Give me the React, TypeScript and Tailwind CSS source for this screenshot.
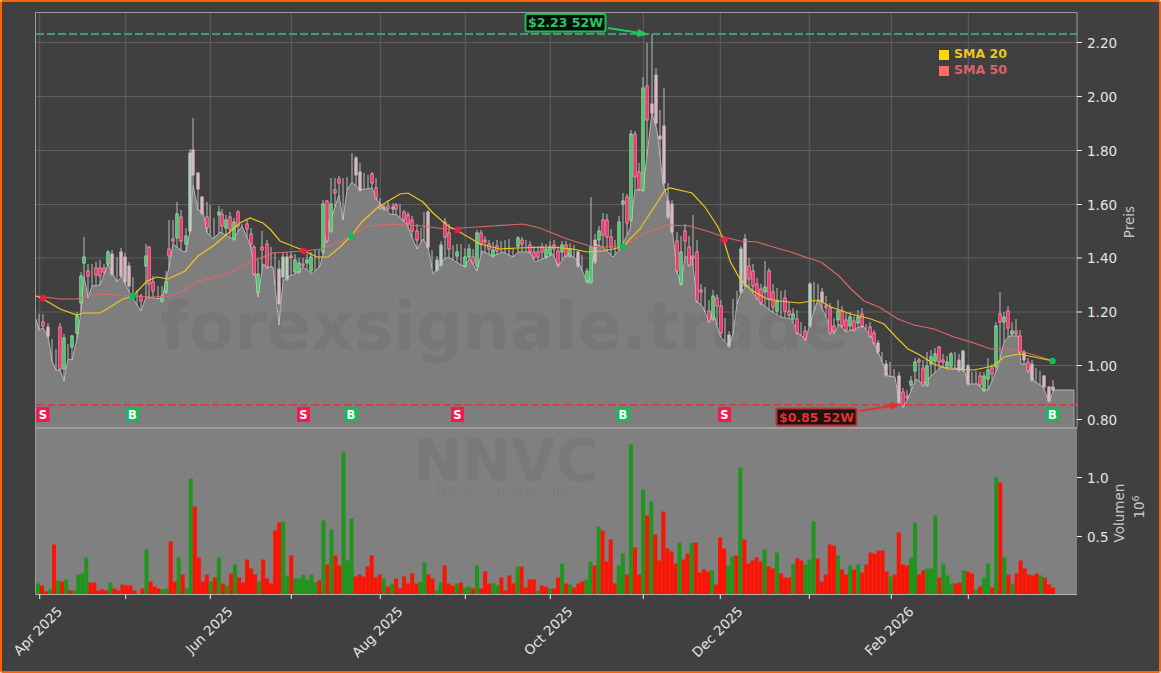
import React from 'react';

type Pt = [number, number];
type Candle = [number, number, number, string, number?];

const PLOT_L = 35.5;
const PLOT_R = 1077;
const PLOT_T = 12.5;
const PRICE_B = 428;
const VOL_B = 594.5;

const area: Pt[] = [
  [36, 319], [39, 330], [43, 328], [48, 336], [52, 361], [56, 370], [60, 370], [64, 381], [68, 359], [72, 360], [77, 339], [81, 311], [84, 276], [88, 298], [92, 286], [100, 285], [108, 264], [117, 282], [122, 276], [130, 294], [141, 311], [146, 297], [162, 299], [169, 267], [173, 244], [182, 251], [186, 252], [190, 231], [193, 185], [198, 210], [203, 212], [207, 232], [213, 239], [220, 232], [233, 239], [242, 226], [250, 244], [254, 264], [258, 297], [263, 264], [268, 267], [273, 267], [279, 325], [283, 281], [287, 277], [295, 274], [303, 267], [312, 274], [320, 266], [323, 254], [328, 224], [333, 213], [339, 195], [343, 220], [347, 190], [352, 182], [360, 190], [372, 188], [377, 200], [390, 214], [397, 215], [407, 224], [412, 237], [417, 249], [423, 239], [428, 247], [433, 274], [442, 261], [448, 257], [463, 266], [470, 259], [477, 271], [482, 251], [493, 256], [503, 252], [513, 257], [518, 252], [530, 252], [535, 262], [547, 257], [553, 254], [558, 267], [567, 252], [578, 261], [588, 284], [592, 267], [595, 244], [603, 247], [613, 257], [620, 249], [630, 229], [635, 190], [643, 190], [652, 113], [657, 130], [663, 183], [668, 200], [672, 227], [677, 271], [681, 285], [685, 257], [692, 257], [697, 301], [703, 307], [709, 322], [713, 311], [720, 336], [729, 346], [733, 334], [737, 304], [741, 292], [747, 286], [762, 304], [771, 311], [781, 317], [791, 319], [799, 334], [806, 339], [809, 327], [818, 299], [826, 317], [834, 334], [839, 324], [846, 332], [854, 329], [863, 326], [871, 336], [879, 354], [888, 376], [895, 377], [899, 402], [904, 406], [909, 396], [916, 379], [923, 384], [931, 376], [941, 367], [964, 369], [968, 384], [978, 384], [983, 390], [988, 390], [998, 367], [1004, 342], [1009, 336], [1018, 336], [1021, 364], [1028, 364], [1034, 381], [1043, 387], [1049, 401], [1054, 390], [1074, 390],
];

const sma20: Pt[] = [
  [36, 296], [43, 299], [60, 309], [77, 315], [83, 313], [100, 313], [107, 309], [123, 299], [133, 296], [147, 281], [157, 277], [168, 279], [185, 271], [198, 256], [213, 246], [225, 236], [240, 223], [250, 218], [263, 223], [270, 229], [280, 241], [300, 249], [317, 257], [328, 257], [340, 247], [351, 236], [362, 222], [377, 208], [390, 200], [400, 194], [408, 193], [423, 202], [433, 213], [448, 226], [458, 231], [480, 244], [500, 249], [517, 248], [550, 247], [573, 249], [587, 252], [603, 251], [623, 247], [630, 239], [640, 229], [643, 224], [657, 203], [665, 190], [670, 188], [692, 193], [705, 207], [718, 227], [724, 241], [730, 261], [740, 279], [753, 291], [767, 299], [780, 301], [799, 303], [818, 300], [831, 307], [851, 314], [871, 319], [884, 324], [896, 337], [908, 349], [918, 354], [934, 364], [948, 369], [974, 370], [993, 366], [1004, 357], [1019, 354], [1034, 357], [1053, 361],
];

const sma50: Pt[] = [
  [36, 296], [60, 299], [77, 299], [88, 296], [100, 294], [133, 296], [153, 297], [170, 296], [183, 291], [197, 282], [227, 274], [250, 262], [273, 253], [303, 251], [323, 249], [350, 237], [367, 226], [390, 224], [423, 226], [445, 229], [477, 227], [523, 224], [540, 228], [567, 239], [590, 246], [603, 247], [623, 247], [643, 234], [667, 225], [690, 226], [710, 232], [724, 237], [740, 241], [757, 242], [780, 249], [791, 252], [808, 258], [821, 262], [839, 276], [851, 289], [864, 301], [879, 307], [898, 319], [914, 325], [934, 329], [954, 337], [971, 342], [991, 349], [1011, 349], [1031, 354], [1053, 361],
];

const candles: Candle[] = [
  [39, 314, 318, 'w'], [43, 322, 326, 'r', 314], [48, 327, 336, 'p'], [52, 339, 339, 'w'], [56, 349, 349, 'w'], [60, 327, 369, 'r'], [64, 338, 369, 'g'], [68, 344, 344, 'w'], [72, 336, 347, 'g', 335], [77, 316, 333, 'g', 312], [81, 276, 303, 'g', 272], [84, 257, 263, 'g', 237], [88, 271, 276, 'r', 264], [92, 264, 264, 'w'], [96, 268, 275, 'r', 262], [100, 268, 276, 'r', 260], [104, 268, 272, 'r', 264], [108, 252, 264, 'g', 250], [112, 254, 274, 'p'], [117, 257, 257, 'w'], [121, 252, 276, 'p'], [125, 257, 282, 'p'], [129, 266, 286, 'p'], [133, 277, 277, 'w'], [137, 290, 290, 'w'], [141, 296, 301, 'r', 294], [146, 256, 266, 'g', 244], [149, 247, 284, 'r', 246], [153, 282, 291, 'r', 276], [158, 286, 286, 'w'], [162, 296, 301, 'g', 286], [166, 282, 292, 'g', 271], [169, 249, 256, 'r', 220], [173, 239, 241, 'r', 220], [177, 214, 238, 'g', 202], [181, 217, 241, 'r', 210], [186, 236, 244, 'g', 228],
  [190, 153, 231, 'q'], [193, 150, 175, 'p', 118], [198, 173, 189, 'p', 172], [202, 197, 213, 'p', 196], [207, 217, 228, 'r', 202], [210, 205, 205, 'w'], [214, 218, 218, 'w'], [219, 212, 215, 'g', 206], [222, 214, 226, 'r', 209], [226, 220, 228, 'g', 215], [230, 217, 229, 'r', 212], [234, 222, 239, 'g', 218], [238, 212, 226, 'r', 210], [242, 224, 224, 'w'], [247, 224, 229, 'r', 220], [251, 234, 244, 'r', 228], [254, 247, 274, 'r', 245], [258, 274, 292, 'g', 260], [262, 247, 250, 'r', 231], [267, 244, 267, 'r', 240], [271, 247, 247, 'w'], [275, 252, 252, 'w'], [279, 269, 304, 'p', 260], [283, 257, 277, 'q', 252], [287, 257, 279, 'q', 252], [291, 256, 257, 'r', 252], [295, 260, 272, 'g', 254], [299, 263, 272, 'g', 258], [303, 264, 265, 'r', 258], [307, 260, 263, 'g', 254], [311, 257, 271, 'g', 252], [315, 250, 250, 'w'], [319, 250, 250, 'w'], [323, 204, 252, 'g', 200], [327, 201, 241, 'r', 200], [331, 204, 231, 'g', 178], [335, 190, 193, 'r', 178], [339, 179, 183, 'r', 176], [343, 178, 178, 'w'], [347, 177, 177, 'w'], [352, 153, 153, 'w'], [356, 158, 175, 'p', 156], [360, 172, 190, 'p', 163], [364, 173, 173, 'w'], [368, 175, 175, 'w'], [372, 174, 183, 'r', 172], [376, 188, 198, 'r', 178], [380, 205, 208, 'r', 198], [384, 207, 209, 'g', 204], [388, 206, 209, 'r', 200],
  [393, 207, 209, 'g', 203], [396, 205, 209, 'r', 203], [400, 204, 204, 'w'], [404, 212, 220, 'r', 210], [408, 215, 224, 'r', 212], [412, 220, 231, 'r', 216], [417, 231, 240, 'r', 224], [421, 228, 228, 'w'], [424, 212, 212, 'w'], [428, 212, 247, 'p', 210], [432, 250, 250, 'w'], [437, 260, 270, 'q'], [441, 245, 265, 'q'], [445, 222, 237, 'r', 218], [449, 233, 249, 'r', 224], [453, 245, 245, 'w'], [457, 252, 256, 'g', 244], [461, 244, 244, 'w'], [465, 257, 266, 'g', 248], [469, 249, 257, 'g', 244], [473, 257, 263, 'r', 249], [477, 233, 266, 'g', 230], [481, 233, 244, 'r', 230], [485, 240, 242, 'r', 236], [489, 244, 249, 'r', 240], [493, 250, 256, 'g', 242], [497, 246, 251, 'r', 240], [501, 241, 241, 'w'], [505, 240, 240, 'w'], [509, 239, 239, 'w'], [513, 249, 249, 'w'], [518, 238, 246, 'g', 236], [522, 240, 244, 'r', 237], [526, 240, 240, 'w'], [530, 245, 252, 'r', 241], [534, 252, 257, 'r', 246], [538, 252, 257, 'r', 246], [542, 247, 252, 'r', 243], [546, 249, 257, 'g', 244], [550, 247, 254, 'g', 241], [554, 245, 249, 'r', 240], [558, 251, 264, 'r', 246], [562, 245, 252, 'g', 241], [566, 245, 256, 'r', 241], [570, 249, 256, 'g', 243], [574, 245, 245, 'w'], [578, 252, 266, 'p', 250], [582, 255, 255, 'w'], [587, 271, 281, 'g', 268], [591, 247, 282, 'g', 197], [595, 240, 262, 'p', 234], [599, 231, 240, 'g', 226], [603, 220, 235, 'r', 213], [607, 220, 237, 'r', 214], [611, 237, 247, 'r', 229], [615, 240, 240, 'w'], [619, 222, 247, 'g', 216],
  [623, 201, 204, 'g', 193], [627, 197, 223, 'r', 194], [631, 134, 220, 'g'], [635, 134, 177, 'r', 131], [639, 172, 189, 'r', 163], [643, 88, 190, 'g', 77], [647, 86, 120, 'r', 43], [652, 104, 113, 'p', 34], [656, 75, 123, 'p', 68], [660, 136, 139, 'p', 110], [664, 126, 183, 'p', 88], [668, 201, 217, 'p', 183], [672, 204, 232, 'p', 200], [677, 241, 271, 'r', 232], [681, 252, 284, 'g', 236], [685, 231, 241, 'r', 224], [689, 247, 265, 'r', 236], [693, 256, 258, 'r', 215], [697, 252, 301, 'r', 240], [701, 290, 292, 'r', 284], [705, 287, 287, 'w'], [709, 311, 321, 'r', 300], [713, 296, 319, 'g', 290], [717, 298, 306, 'r', 294], [721, 306, 333, 'r', 300], [725, 318, 318, 'w'], [729, 335, 346, 'q'], [733, 299, 299, 'w'], [737, 291, 291, 'w'], [741, 249, 292, 'q', 246], [745, 239, 286, 'p', 234], [749, 266, 279, 'r', 258], [753, 271, 286, 'r', 264], [757, 284, 298, 'r', 278], [761, 289, 303, 'r', 284], [765, 287, 292, 'g', 261], [769, 271, 299, 'r', 268], [773, 292, 307, 'r', 284], [777, 301, 311, 'g', 288], [781, 291, 291, 'w'], [785, 298, 311, 'r', 290], [789, 311, 315, 'r', 302], [793, 314, 319, 'g', 308], [797, 319, 333, 'r', 310], [801, 322, 322, 'w'], [805, 331, 339, 'r', 326],
  [810, 284, 326, 'q', 282], [814, 282, 282, 'w'], [818, 284, 284, 'w'], [822, 292, 302, 'p', 288], [826, 306, 307, 'r', 296], [830, 308, 333, 'r', 303], [834, 326, 331, 'r', 318], [838, 311, 320, 'g', 300], [842, 311, 326, 'r', 306], [846, 320, 330, 'r', 313], [850, 317, 326, 'g', 312], [854, 321, 330, 'r', 316], [858, 317, 323, 'g', 310], [862, 314, 326, 'r', 308], [866, 324, 324, 'w'], [870, 327, 336, 'r', 322], [874, 333, 343, 'r', 330], [878, 343, 352, 'p', 340], [882, 352, 352, 'w'], [886, 364, 375, 'p', 360], [890, 362, 362, 'w'], [894, 369, 369, 'w'], [899, 376, 402, 'p'], [903, 392, 406, 'r', 388], [907, 396, 397, 'r', 390], [911, 381, 385, 'g', 376], [915, 362, 371, 'g', 358], [919, 360, 362, 'r', 358], [923, 368, 385, 'r', 360], [927, 366, 385, 'g', 352], [931, 357, 364, 'g', 350], [935, 354, 361, 'g', 348], [939, 347, 362, 'r', 346], [943, 360, 362, 'r', 354], [947, 362, 366, 'g', 356], [951, 354, 366, 'g', 352], [955, 352, 352, 'w'], [959, 360, 370, 'p', 354], [963, 351, 370, 'q', 350], [968, 366, 384, 'p', 364], [972, 372, 372, 'w'], [976, 371, 371, 'w'], [980, 376, 385, 'r', 372], [984, 376, 390, 'g', 372], [988, 370, 379, 'g', 358], [992, 368, 374, 'r', 364], [996, 326, 367, 'g', 322], [1000, 314, 322, 'r', 292], [1004, 317, 322, 'g', 312], [1008, 311, 328, 'r', 306], [1012, 331, 334, 'g', 322], [1016, 331, 334, 'r', 319], [1020, 336, 352, 'r', 330], [1024, 352, 360, 'p', 350], [1028, 362, 371, 'r', 358], [1032, 364, 380, 'p', 360], [1036, 368, 368, 'w'], [1040, 371, 371, 'w'], [1044, 376, 387, 'p', 375], [1049, 387, 401, 'p', 386], [1053, 387, 390, 'p', 380],
];

// bar height in px, negative means red
const volSegments: { start: number; step: number; bars: number[] }[] = [
  {
    start: 36,
    step: 4.02,
    bars: [11, -9, -3, 5, -50, 14, -13, 15, -4, 4, 20, 21, 37, -12, -12, -4, -5, -4, 12, -6, -4, -10, -9, -9, -4, 1, -6, 45, -13, -8, -6, 5, 6, -53, -13, 37, -20, 6, 116, -88, -37, -13, -20, 13, -17, 37, -11, 9, -21, 30, -17, -12, -35, -26, -20, 13, -35, -16, -11, -64, -72, 73, 19, -39, 16, 16, 20, 15, 20, 12, -14, 74, -30, 65, -39, -29, 142, 34, 76, -18, -20, -18, -28, -39, -17, -20, 16, -8],
  },
  {
    start: 390,
    step: 4.05,
    bars: [11, -16, -6, -18, -11, -21, -11, 13, 32, -20, -16, 4, 12, -29, -11, -9, 11, -12, 7, 8, -6, 29, -6, -23, -11, 11, 9, -17, -4, -19, -11, 28, -28, -7, -15, -15, 4, -9, -8, 6, -6, -17, 31, -11, 10, -7, -11, -13, 15, 33, -29, 68, -64, -33, -55, -11, 29, 41, -20, 150, -47, -20, 105, -79, 93, -60, -34, -83, -46, -43, -31, 52, -35, -41, 52, -52, -22, -25, -23, 24, -10, -57, -46, 29, 38, -39, 127, -55, -31, -34, -37, -33, 45, -28, -26],
  },
  {
    start: 775,
    step: 4.06,
    bars: [42, -21, -17, -17, 31, -36, -34, 30, 35, 73, -36, -13, -20, -50, -49, 39, -25, -20, 29, -25, 30, -22, -30, -42, -41, -44, -44, -23, 18, -20, -62, -30, -29, 37, 72, -20, -24, 26, 26, 79, -17, 31, 19, 11, -11, -12, 24, -23, -21, 5, -8, 17, 31, -7, 117, -112, 37, -20, 11, -21, -34, -26, -20, -19, -21, 19, -17, -10, -7],
  },
];

const yTicks: [string, number][] = [
  ['2.20', 42.5], ['2.00', 96.5], ['1.80', 150.5], ['1.60', 204.5], ['1.40', 258], ['1.20', 312], ['1.00', 365.5], ['0.80', 419.5],
];
const xGrid = [39.7, 125.7, 210.3, 291.3, 380.3, 465.3, 550.3, 643.3, 720.3, 809.3, 891.3, 968.3];
const xLabels: [string, number][] = [
  ['Apr 2025', 39.7], ['Jun 2025', 210.3], ['Aug 2025', 380.3], ['Oct 2025', 550.3], ['Dec 2025', 720.3], ['Feb 2026', 891.3],
];

const signals: [string, number, number][] = [
  ['S', 43, 298], ['B', 132.5, 296], ['S', 303.5, 251], ['B', 351, 236], ['S', 457.5, 230], ['B', 623, 247], ['S', 724.5, 240], ['B', 1052.5, 361],
];

const toPoints = (pts: Pt[]) => pts.map((p) => p.join(',')).join(' ');

const areaAt = (x: number) => {
  for (let i = 1; i < area.length; i++) {
    if (x <= area[i][0]) {
      const [x0, y0] = area[i - 1];
      const [x1, y1] = area[i];
      return y0 + ((x - x0) / (x1 - x0)) * (y1 - y0);
    }
  }
  return area[area.length - 1][1];
};

const bodyColors: Record<string, { fill: string; stroke: string }> = {
  r: { fill: '#f0205a', stroke: '#ffa0b8' },
  g: { fill: '#3ebd60', stroke: '#a8e8b4' },
  p: { fill: '#d8b8c2', stroke: '#d8b8c2' },
  q: { fill: '#b8ccbc', stroke: '#b8ccbc' },
};

const CandleMark = ({ c }: { c: Candle }) => {
  const [x, top, bot, kind, wickTop] = c;
  const low = Math.max(bot + 2, areaAt(x));
  const high = wickTop ?? (kind === 'w' ? top : top - 4);
  const style = bodyColors[kind];
  return (
    <g>
      <line x1={x} x2={x} y1={high} y2={low} stroke="#c8c8c8" strokeWidth={0.9} />
      {style && (
        <rect x={x - 1.2} y={top} width={2.4} height={Math.max(bot - top, 1.5)} fill={style.fill} stroke={style.stroke} strokeWidth={0.8} />
      )}
    </g>
  );
};

const Chart = () => (
  <svg viewBox="2 2 1157 669" className="block w-full h-full font-['DejaVu_Sans',sans-serif]">
    {/* grid */}
    {yTicks.map(([, y]) => (
      <line key={y} x1={PLOT_L} x2={PLOT_R} y1={y} y2={y} stroke="#5f5f5f" strokeWidth={1} />
    ))}
    {xGrid.map((x) => (
      <line key={x} x1={x} x2={x} y1={PLOT_T} y2={PRICE_B} stroke="#5f5f5f" strokeWidth={1} />
    ))}

    {/* price area */}
    <polygon points={`36,${PRICE_B} ${toPoints(area)} 1074,${PRICE_B}`} fill="#808080" fillOpacity={0.97} />
    <polyline points={toPoints(area)} fill="none" stroke="#b4b4b4" strokeWidth={1} />
    <line x1={1074} x2={1074} y1={390} y2={PRICE_B} stroke="#a8a8a8" strokeWidth={1} />

    {/* volume panel */}
    <rect x={PLOT_L} y={PRICE_B} width={PLOT_R - PLOT_L} height={VOL_B - PRICE_B} fill="#808080" />
    <line x1={PLOT_L} x2={PLOT_R} y1={PRICE_B} y2={PRICE_B} stroke="#9c9c9c" strokeWidth={2} />

    {/* watermark */}
    <text x={160} y={349} fontSize={66} fontWeight={700} fill="#000000" fillOpacity={0.055}>forexsignale.trade</text>
    <text x={506} y={481} textAnchor="middle" fontSize={58} fontWeight={700} fill="#000000" fillOpacity={0.055}>NNVC</text>
    <text x={505} y={496} textAnchor="middle" fontSize={15.5} fill="#000000" fillOpacity={0.055}>NanoViricides, Inc</text>

    {/* volume bars */}
    {volSegments.map((seg) =>
      seg.bars.map((v, i) => (
        <rect
          key={`${seg.start}-${i}`}
          x={seg.start + i * seg.step}
          y={VOL_B - Math.abs(v)}
          width={4}
          height={Math.abs(v)}
          fill={v < 0 ? '#ff0f00' : '#1c9619'}
          fillOpacity={0.97}
        />
      ))
    )}

    {/* candles */}
    {candles.map((c) => (
      <CandleMark key={c[0]} c={c} />
    ))}

    {/* moving averages */}
    <polyline points={toPoints(sma50)} fill="none" stroke="#e06666" strokeWidth={1.2} />
    <polyline points={toPoints(sma20)} fill="none" stroke="#ecc81e" strokeWidth={1.2} />

    {/* 52 week lines */}
    <line x1={36} x2={PLOT_R} y1={34} y2={34} stroke="#3f9d6a" strokeWidth={2} strokeDasharray="8 3" />
    <line x1={36} x2={PLOT_R} y1={405} y2={405} stroke="#d84040" strokeWidth={2} strokeDasharray="8 3" />

    {/* signals */}
    {signals.map(([label, x, y]) => {
      const color = label === 'S' ? '#f5174f' : '#0ebd5a';
      return (
        <g key={x}>
          <circle cx={x} cy={y} r={3.2} fill={color} />
          <rect x={x - 6.5} y={407} width={13} height={15} fill={color} />
          <text x={x} y={419} textAnchor="middle" fontSize={11.5} fontWeight={700} fill="#ffffff">{label}</text>
        </g>
      );
    })}

    {/* 52 week annotations */}
    <rect x={525.5} y={14} width={80} height={17.5} rx={2} fill="#060f0a" stroke="#22b860" strokeWidth={2} />
    <text x={565.5} y={27} textAnchor="middle" fontSize={12.5} fontWeight={700} fill="#2cc466">$2.23 52W</text>
    <line x1={608} y1={28} x2={640} y2={33} stroke="#22c55e" strokeWidth={2} />
    <polygon points="649,34.5 638,29 637,37" fill="#22c55e" />

    <rect x={776.5} y={408.5} width={80} height={17} rx={2} fill="#1c1212" stroke="#c03030" strokeWidth={2} />
    <text x={816.5} y={422} textAnchor="middle" fontSize={12.5} fontWeight={700} fill="#e53030">$0.85 52W</text>
    <line x1={859} y1={411} x2={892} y2={406} stroke="#e53030" strokeWidth={2} />
    <polygon points="901,404.5 890,402 891,410" fill="#e53030" />

    {/* legend */}
    <rect x={939} y={50} width={10} height={10} fill="#ffd600" />
    <text x={954} y={58} fontSize={12.5} fontWeight={700} fill="#e8c81e">SMA 20</text>
    <rect x={939} y={66} width={10} height={10} fill="#ff6b6b" />
    <text x={954} y={74} fontSize={12.5} fontWeight={700} fill="#e0606a">SMA 50</text>

    {/* frame */}
    <path d={`M${PLOT_L} ${VOL_B} V${PLOT_T} H${PLOT_R} V${PRICE_B}`} fill="none" stroke="#9a9a9a" strokeWidth={1} />
    <line x1={PLOT_L} x2={PLOT_R} y1={VOL_B} y2={VOL_B} stroke="#b0b0b0" strokeWidth={1} />

    {/* price axis */}
    {yTicks.map(([label, y]) => (
      <g key={label}>
        <line x1={PLOT_R} x2={PLOT_R + 5} y1={y} y2={y} stroke="#eeeeee" strokeWidth={1} />
        <text x={1087} y={y + 5} fontSize={13.5} fill="#e4e4e4">{label}</text>
      </g>
    ))}
    <text transform="translate(1134 222) rotate(-90)" textAnchor="middle" fontSize={13.5} fill="#c8c8c8">Preis</text>

    {/* volume axis */}
    {([['1.0', 477.5], ['0.5', 536.5]] as [string, number][]).map(([label, y]) => (
      <g key={label}>
        <line x1={PLOT_R} x2={PLOT_R + 5} y1={y} y2={y} stroke="#eeeeee" strokeWidth={1} />
        <text x={1087} y={y + 5} fontSize={13.5} fill="#e4e4e4">{label}</text>
      </g>
    ))}
    <text transform="translate(1124 513) rotate(-90)" textAnchor="middle" fontSize={13.5} fill="#c8c8c8">Volumen</text>
    <text transform="translate(1144 507) rotate(-90)" textAnchor="middle" fontSize={13.5} fill="#c8c8c8">
      10<tspan fontSize={9.5} dy={-5}>6</tspan>
    </text>

    {/* date axis */}
    {xGrid.map((x) => (
      <line key={x} x1={x} x2={x} y1={VOL_B} y2={VOL_B + 4.5} stroke="#eeeeee" strokeWidth={1} />
    ))}
    {xLabels.map(([label, x]) => (
      <text key={label} transform={`translate(${x + 16} 605) rotate(-45)`} textAnchor="end" fontSize={13.5} fill="#e4e4e4" dominantBaseline="hanging">
        {label}
      </text>
    ))}
  </svg>
);

const App = () => (
  <div className="w-[1161px] h-[673px] bg-white">
    <div className="w-full h-full rounded-[3px] border-2 border-[#ff6000] border-r-[#e8661c] bg-[#404040] overflow-hidden">
      <Chart />
    </div>
  </div>
);

export default App;
